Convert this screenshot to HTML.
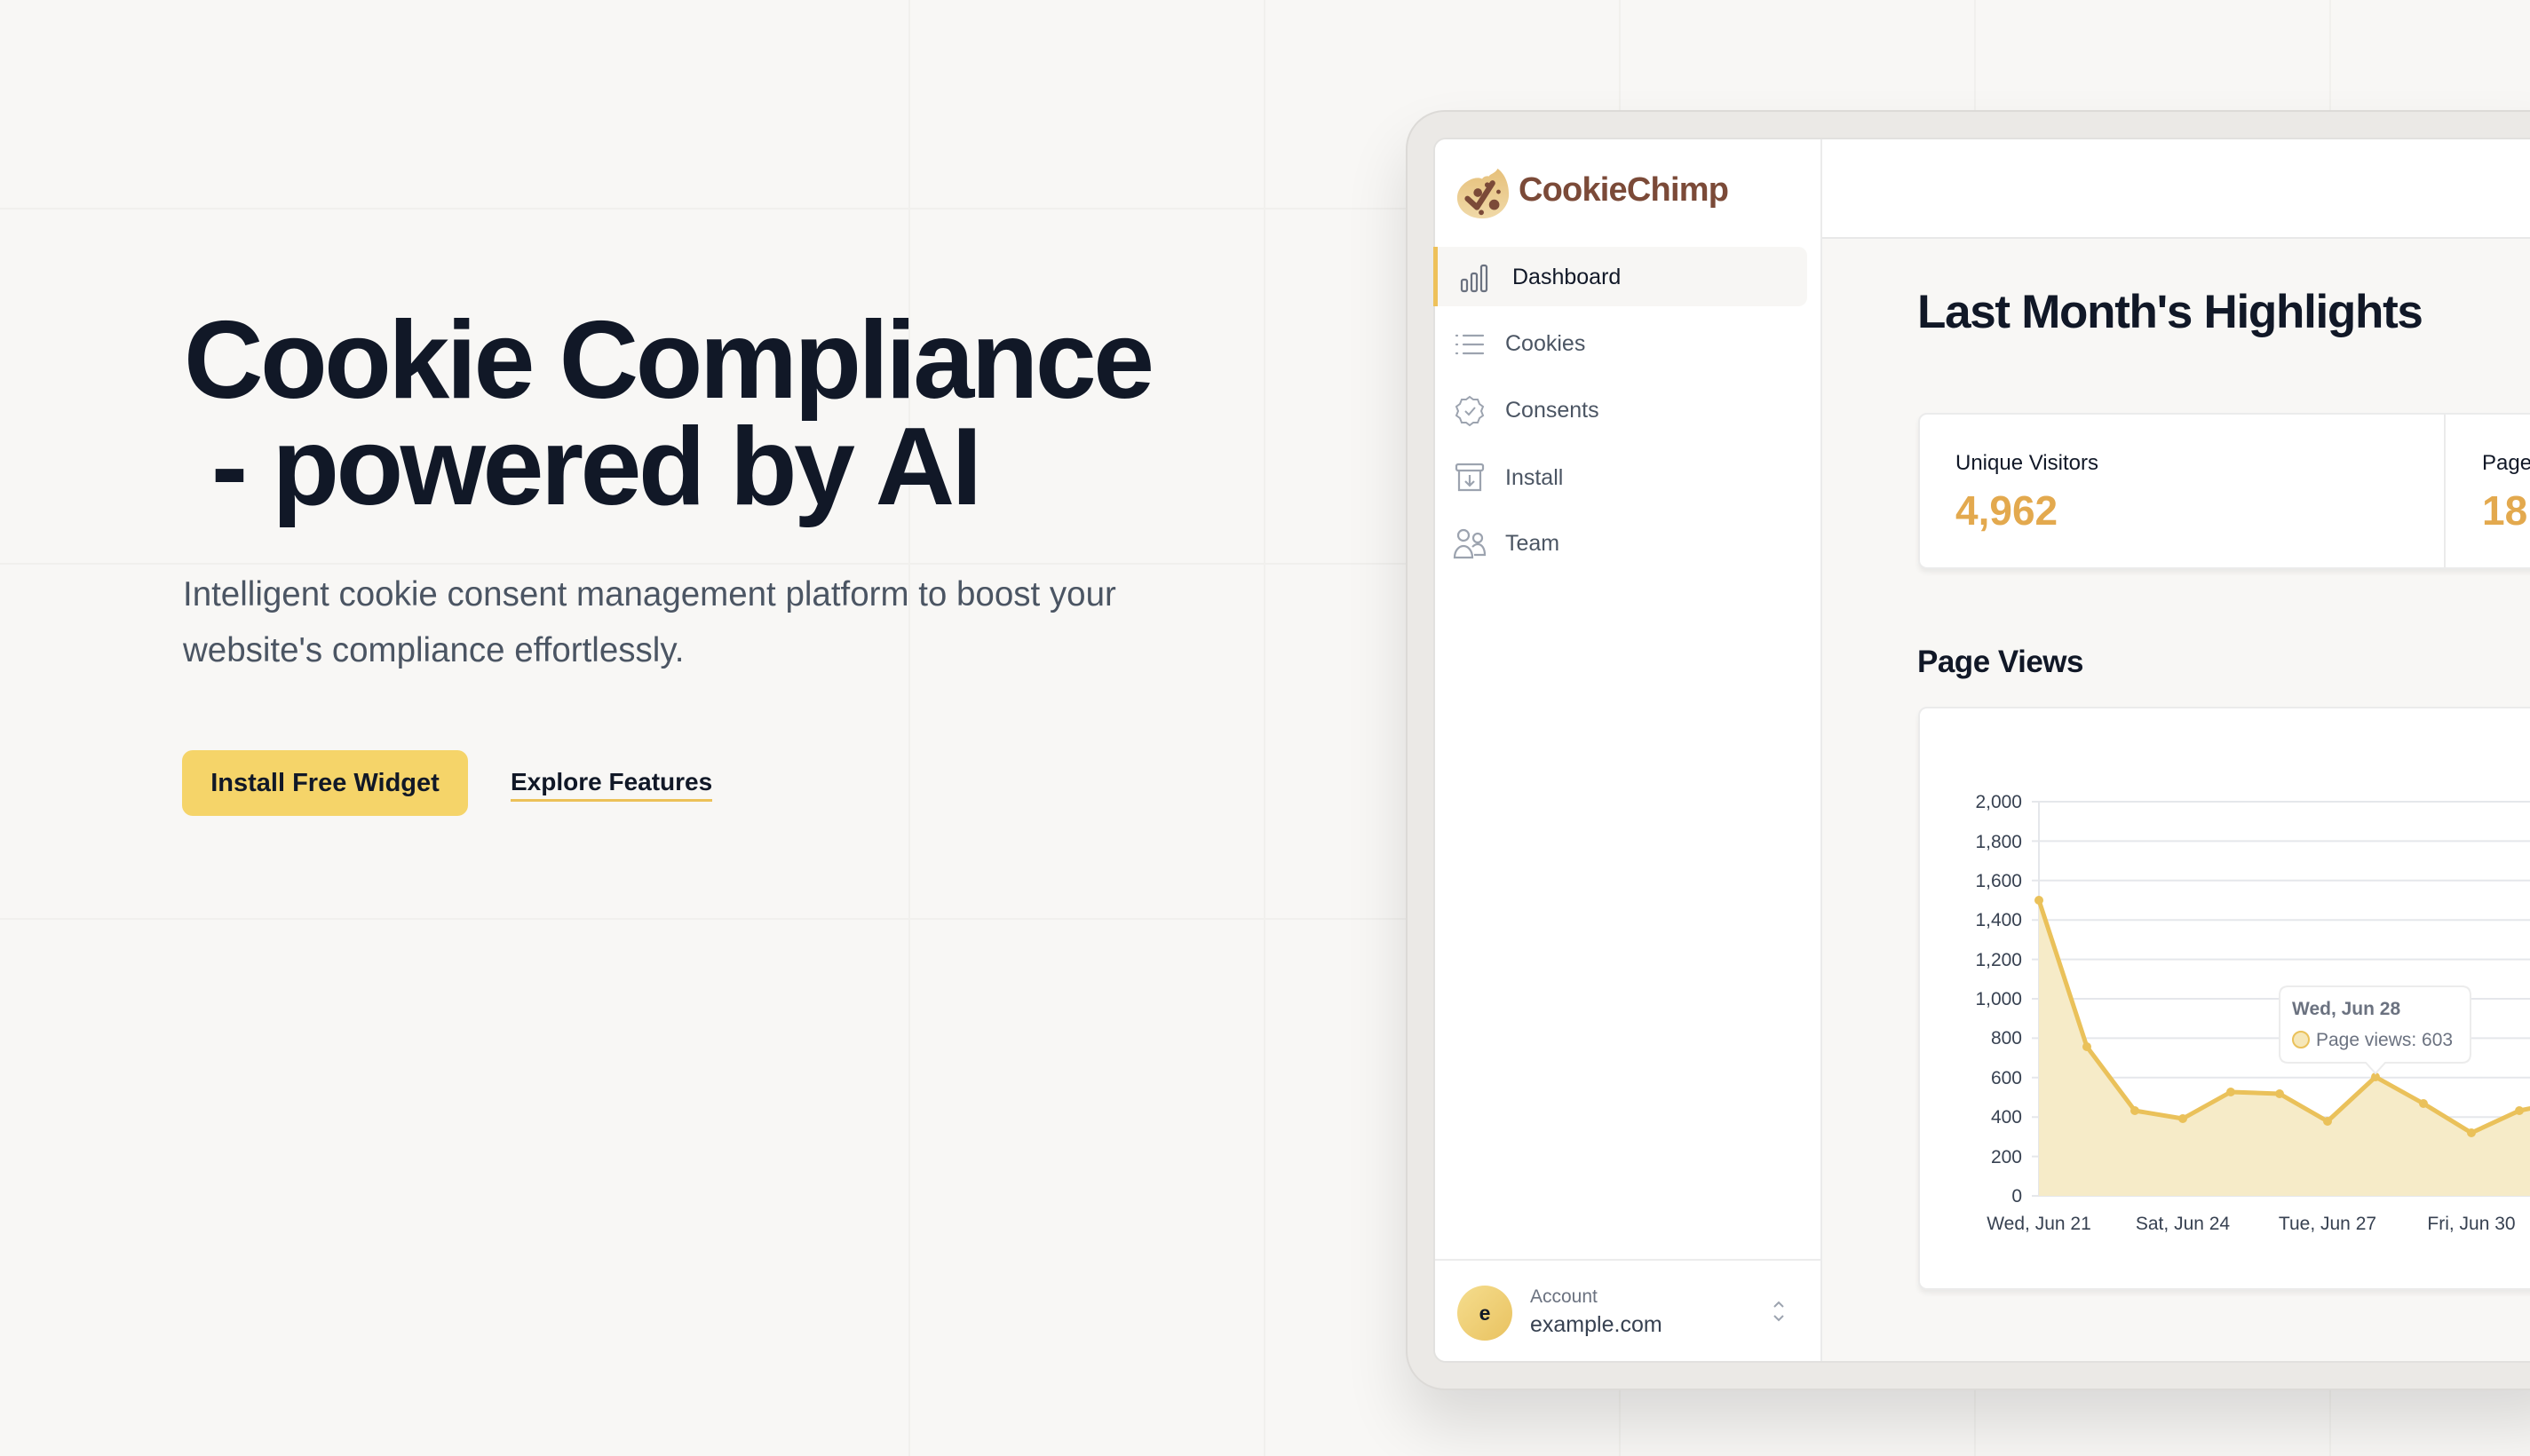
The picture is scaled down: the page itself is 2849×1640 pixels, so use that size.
<!DOCTYPE html>
<html><head><meta charset="utf-8"><style>
*{margin:0;padding:0;box-sizing:border-box}
body{width:2849px;height:1640px;overflow:hidden;background:#f8f7f5;font-family:"Liberation Sans",sans-serif;position:relative}
.a{position:absolute}
.vl{position:absolute;top:0;bottom:0;width:2px;background:#f1f0ed}
.hl{position:absolute;left:0;right:0;height:2px;background:#f1f0ed}
h1{position:absolute;left:207px;top:346px;font-size:124px;line-height:120px;font-weight:700;color:#111827;letter-spacing:-3.6px;white-space:pre}
.p{left:206px;top:638px;font-size:38.5px;line-height:63px;color:#4b5563;width:1200px}
.btn{left:205px;top:845px;width:322px;height:74px;background:#f5d469;border-radius:12px;font-size:29px;font-weight:700;color:#111827;text-align:center;line-height:74px}
.exp{left:575px;top:864px;font-size:28px;font-weight:700;color:#111827;border-bottom:3px solid #ecc158;line-height:34px;padding-bottom:2px}
.nav{position:absolute;font-size:25px;color:#4b5563}
</style></head><body>
<div class="vl" style="left:1023px"></div><div class="vl" style="left:1423px"></div><div class="vl" style="left:1823px"></div><div class="vl" style="left:2223px"></div><div class="vl" style="left:2623px"></div>
<div class="hl" style="top:234px"></div><div class="hl" style="top:634px"></div><div class="hl" style="top:1034px"></div>

<h1>Cookie Compliance
 - powered by AI</h1>
<div class="a p">Intelligent cookie consent management platform to boost your website's compliance effortlessly.</div>
<div class="a btn">Install Free Widget</div>
<div class="a exp">Explore Features</div>

<!-- frame -->
<div class="a" style="left:1583px;top:124px;width:1320px;height:1442px;background:#ebe9e6;border:2px solid #dcdad7;border-radius:44px;box-shadow:0 40px 70px rgba(0,0,0,0.12)"></div>
<div class="a" style="left:1614px;top:155px;width:1300px;height:1380px;background:#f8f7f5;border:2px solid #e2e1df;border-radius:14px;overflow:hidden">
  <div class="a" style="left:0;top:0;width:436px;height:1380px;background:#fff;border-right:2px solid #ebebeb"></div>
  <div class="a" style="left:436px;top:0;width:900px;height:112px;background:#fff;border-bottom:2px solid #e8e8e8"></div>
</div>
<!-- logo -->
<svg class="a" style="left:1638px;top:186px" width="64" height="62" viewBox="0 0 66 62">
<defs><linearGradient id="g" x1="0" y1="0" x2="0" y2="1"><stop offset="0" stop-color="#e6c07a"/><stop offset="1" stop-color="#f0d9a8"/></linearGradient></defs>
<path d="M50 3 C47 9 41 9 40 12 C36 11 33 13 32 15 C28 13 22 14 18 16 C8 21 3 29 3 37 C3 51 16 61 32 61 C49 61 63 49 63 33 C63 20 58 9 50 3Z" fill="url(#g)"/>
<path d="M15 38 L26 48 L44 20" stroke="#7b4a38" stroke-width="6.5" fill="none" stroke-linecap="round" stroke-linejoin="round"/>
<circle cx="27" cy="31" r="5" fill="#7b4a38"/><circle cx="38" cy="22" r="3" fill="#7b4a38"/><circle cx="46" cy="45" r="6" fill="#7b4a38"/><circle cx="31" cy="54" r="3" fill="#7b4a38"/><circle cx="51" cy="30" r="2.5" fill="#7b4a38"/>
</svg>
<div class="a" style="left:1710px;top:193px;font-size:38px;font-weight:700;color:#7b4a38;letter-spacing:-0.8px">CookieChimp</div>
<!-- nav -->
<div class="a" style="left:1614px;top:278px;width:421px;height:67px;background:#f7f6f4;border-left:5px solid #eec15a;border-radius:0 10px 10px 0"></div>
<svg class="a" style="left:1644px;top:296px" width="34" height="34" viewBox="0 0 34 34" fill="none" stroke="#6b7280" stroke-width="2.2"><rect x="2" y="19" width="6" height="13" rx="2"/><rect x="13" y="12" width="6" height="20" rx="2"/><rect x="24" y="3" width="6" height="29" rx="2"/></svg>
<div class="nav" style="left:1703px;top:298px;color:#111827">Dashboard</div>
<svg class="a" style="left:1638px;top:374px" width="34" height="28" viewBox="0 0 34 28" stroke="#9ca3af" stroke-width="2.2" stroke-linecap="round"><path d="M10 4H32M10 14H32M10 24H32M2 4h1M2 14h1M2 24h1"/></svg>
<div class="nav" style="left:1695px;top:373px">Cookies</div>
<svg class="a" style="left:1638px;top:445px" width="34" height="36" viewBox="0 0 34 36" fill="none" stroke="#9ca3af" stroke-width="2"><path d="M17 2l4 3 5 0 2 5 4 3-2 5 2 5-4 3-2 5-5 0-4 3-4-3-5 0-2-5-4-3 2-5-2-5 4-3 2-5 5 0z"/><path d="M12 18l4 4 7-8"/></svg>
<div class="nav" style="left:1695px;top:448px">Consents</div>
<svg class="a" style="left:1638px;top:520px" width="34" height="36" viewBox="0 0 34 36" fill="none" stroke="#9ca3af" stroke-width="2.2"><rect x="2" y="3" width="30" height="7" rx="2"/><path d="M5 10v22h24V10M17 15v12M12 22l5 5 5-5"/></svg>
<div class="nav" style="left:1695px;top:524px">Install</div>
<svg class="a" style="left:1636px;top:594px" width="38" height="36" viewBox="0 0 38 36" fill="none" stroke="#9ca3af" stroke-width="2.2"><circle cx="12" cy="9" r="6"/><circle cx="28" cy="12" r="5"/><path d="M2 34c0-8 5-13 10-13s10 5 10 13zM22 22c2-2 4-3 6-3 5 0 8 5 8 12h-12"/></svg>
<div class="nav" style="left:1695px;top:598px">Team</div>
<!-- account -->
<div class="a" style="left:1616px;top:1418px;width:434px;height:2px;background:#ececec"></div>
<div class="a" style="left:1641px;top:1448px;width:62px;height:62px;border-radius:50%;background:linear-gradient(135deg,#f5dd8e,#e9c260);font-size:23px;font-weight:700;text-align:center;line-height:62px;color:#111827">e</div>
<div class="a" style="left:1723px;top:1449px;font-size:21px;color:#6b7280">Account</div>
<div class="a" style="left:1723px;top:1478px;font-size:25px;color:#374151">example.com</div>
<svg class="a" style="left:1994px;top:1462px" width="18" height="30" viewBox="0 0 18 30" fill="none" stroke="#9ca3af" stroke-width="2"><path d="M4 10l5-5 5 5M4 20l5 5 5-5"/></svg>
<!-- main -->
<div class="a" style="left:2159px;top:321px;font-size:53px;font-weight:700;color:#111827;letter-spacing:-1.3px">Last Month's Highlights</div>
<div class="a" style="left:2160px;top:465px;width:760px;height:176px;background:#fff;border:2px solid #ebebeb;border-radius:10px;box-shadow:0 4px 6px rgba(0,0,0,0.06)"></div>
<div class="a" style="left:2752px;top:467px;width:2px;height:172px;background:#ebebeb"></div>
<div class="a" style="left:2202px;top:508px;font-size:24px;color:#111827">Unique Visitors</div>
<div class="a" style="left:2202px;top:548px;font-size:46px;font-weight:700;color:#e3a94e">4,962</div>
<div class="a" style="left:2795px;top:508px;font-size:24px;color:#111827">Page</div>
<div class="a" style="left:2795px;top:548px;font-size:46px;font-weight:700;color:#e3a94e">18,</div>
<div class="a" style="left:2159px;top:726px;font-size:35px;font-weight:700;color:#111827;letter-spacing:-0.5px">Page Views</div>
<div class="a" style="left:2160px;top:796px;width:760px;height:657px;background:#fff;border:2px solid #ebebeb;border-radius:10px;box-shadow:0 4px 6px rgba(0,0,0,0.06)"></div>
<svg class="a" style="left:0;top:0" width="2849" height="1640" viewBox="0 0 2849 1640" font-family="Liberation Sans, sans-serif">
<g stroke="#e5e7eb" stroke-width="2">
<line x1="2288" x2="2849" y1="1347" y2="1347"/><line x1="2288" x2="2849" y1="1302.6" y2="1302.6"/><line x1="2288" x2="2849" y1="1258.2" y2="1258.2"/><line x1="2288" x2="2849" y1="1213.8" y2="1213.8"/><line x1="2288" x2="2849" y1="1169.4" y2="1169.4"/><line x1="2288" x2="2849" y1="1125" y2="1125"/><line x1="2288" x2="2849" y1="1080.6" y2="1080.6"/><line x1="2288" x2="2849" y1="1036.2" y2="1036.2"/><line x1="2288" x2="2849" y1="991.8" y2="991.8"/><line x1="2288" x2="2849" y1="947.4" y2="947.4"/><line x1="2288" x2="2849" y1="903" y2="903"/>
<line x1="2296" x2="2296" y1="903" y2="1347"/>
</g>
<g font-size="21" fill="#374151" text-anchor="end">
<text x="2277" y="1354">0</text><text x="2277" y="1310">200</text><text x="2277" y="1265">400</text><text x="2277" y="1221">600</text><text x="2277" y="1176">800</text><text x="2277" y="1132">1,000</text><text x="2277" y="1088">1,200</text><text x="2277" y="1043">1,400</text><text x="2277" y="999">1,600</text><text x="2277" y="955">1,800</text><text x="2277" y="910">2,000</text>
</g>
<g font-size="21" fill="#374151" text-anchor="middle">
<text x="2296" y="1385">Wed, Jun 21</text><text x="2458" y="1385">Sat, Jun 24</text><text x="2621" y="1385">Tue, Jun 27</text><text x="2783" y="1385">Fri, Jun 30</text>
</g>
<path d="M2296 1014L2350 1179L2404 1251L2458 1260L2512 1230L2567 1232L2621 1263L2675 1213L2729 1243L2783 1276L2837 1251L2891 1240L2891 1347L2296 1347Z" fill="#f6ebc8"/>
<path d="M2296 1014L2350 1179L2404 1251L2458 1260L2512 1230L2567 1232L2621 1263L2675 1213L2729 1243L2783 1276L2837 1251L2891 1240" fill="none" stroke="#eac15a" stroke-width="5" stroke-linejoin="round"/>
<g fill="#eac15a"><circle cx="2296" cy="1014" r="5"/><circle cx="2350" cy="1179" r="5"/><circle cx="2404" cy="1251" r="5"/><circle cx="2458" cy="1260" r="5"/><circle cx="2512" cy="1230" r="5"/><circle cx="2567" cy="1232" r="5"/><circle cx="2621" cy="1263" r="5"/><circle cx="2675" cy="1213" r="5"/><circle cx="2729" cy="1243" r="5"/><circle cx="2783" cy="1276" r="5"/><circle cx="2837" cy="1251" r="5"/></g>
<path d="M2577 1111H2772Q2782 1111 2782 1121V1187Q2782 1197 2772 1197H2686L2675 1209L2664 1197H2577Q2567 1197 2567 1187V1121Q2567 1111 2577 1111Z" fill="#fff" stroke="#ececec" stroke-width="2"/>
<text x="2581" y="1143" font-size="21" font-weight="700" fill="#6b7280">Wed, Jun 28</text>
<circle cx="2591" cy="1171" r="9" fill="#f6e7b8" stroke="#eac15a" stroke-width="2"/>
<text x="2608" y="1178" font-size="21" fill="#6b7280">Page views: 603</text>
</svg>
</body></html>
